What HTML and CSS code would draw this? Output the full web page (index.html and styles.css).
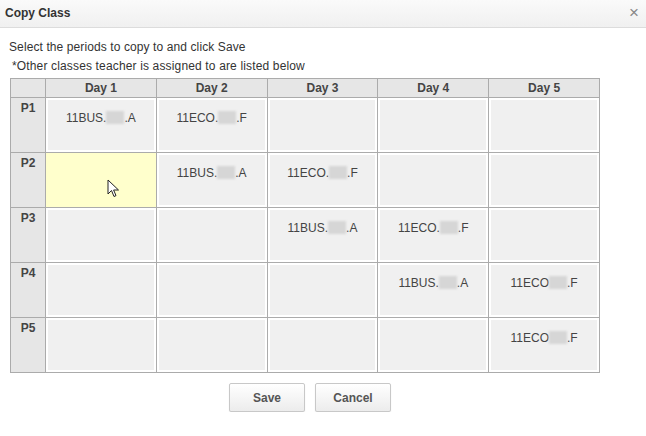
FILE: index.html
```html
<!DOCTYPE html>
<html lang="en">
<head>
    <meta charset="UTF-8">
    <meta name="viewport" content="width=device-width, initial-scale=1.0">
    <title>Copy Class</title>
    <link rel="stylesheet" href="styles.css">
</head>
<body>

    <div class="dialog-title">
        <span>Copy Class</span>
        <span class="close">&times;</span>
    </div>

    <div class="dialog-body">
        <p class="intro">Select the periods to copy to and click Save</p>
        <p class="note">*Other classes teacher is assigned to are listed below</p>

        <table class="grid">
            <colgroup>
                <col class="col-period">
                <col><col><col><col><col>
            </colgroup>
            <thead>
                <tr>
                    <th></th>
                    <th>Day 1</th>
                    <th>Day 2</th>
                    <th>Day 3</th>
                    <th>Day 4</th>
                    <th>Day 5</th>
                </tr>
            </thead>
            <tbody>
                <tr>
                    <th class="period">P1</th>
                    <td><div class="slot">11BUS.<span class="blur"></span>.A</div></td>
                    <td><div class="slot">11ECO.<span class="blur"></span>.F</div></td>
                    <td><div class="slot"></div></td>
                    <td><div class="slot"></div></td>
                    <td><div class="slot"></div></td>
                </tr>
                <tr>
                    <th class="period">P2</th>
                    <td class="selected">
                        <div class="slot">
                            <svg class="cursor" width="13" height="19" viewBox="0 0 13 19">
                                <path d="M1 1 L1 15 L4.5 11.5 L7 17.5 L9 16.6 L6.6 11 L11.5 11 Z" fill="#fff" stroke="#222" stroke-width="1" stroke-linejoin="round"/>
                            </svg>
                        </div>
                    </td>
                    <td><div class="slot">11BUS.<span class="blur"></span>.A</div></td>
                    <td><div class="slot">11ECO.<span class="blur"></span>.F</div></td>
                    <td><div class="slot"></div></td>
                    <td><div class="slot"></div></td>
                </tr>
                <tr>
                    <th class="period">P3</th>
                    <td><div class="slot"></div></td>
                    <td><div class="slot"></div></td>
                    <td><div class="slot">11BUS.<span class="blur"></span>.A</div></td>
                    <td><div class="slot">11ECO.<span class="blur"></span>.F</div></td>
                    <td><div class="slot"></div></td>
                </tr>
                <tr>
                    <th class="period">P4</th>
                    <td><div class="slot"></div></td>
                    <td><div class="slot"></div></td>
                    <td><div class="slot"></div></td>
                    <td><div class="slot">11BUS.<span class="blur"></span>.A</div></td>
                    <td><div class="slot">11ECO<span class="blur"></span>.F</div></td>
                </tr>
                <tr>
                    <th class="period">P5</th>
                    <td><div class="slot"></div></td>
                    <td><div class="slot"></div></td>
                    <td><div class="slot"></div></td>
                    <td><div class="slot"></div></td>
                    <td><div class="slot">11ECO<span class="blur"></span>.F</div></td>
                </tr>
            </tbody>
        </table>

        <div class="button-row">
            <button type="button">Save</button>
            <button type="button">Cancel</button>
        </div>
    </div>

</body>
</html>
```

FILE: styles.css
```css
*, *::before, *::after {
    box-sizing: border-box;
}

body {
    margin: 0;
    padding: 0;
    font-family: "Liberation Sans", Arial, sans-serif;
    font-size: 12px;
    color: #333;
    background-color: white;
}

.dialog-title {
    display: flex;
    justify-content: space-between;
    align-items: center;
    height: 28px;
    padding: 0 7px 1px 5px;
    background: linear-gradient(#fafafa, #f0f0f0);
    border-bottom: 1px solid #dcdcdc;
    font-weight: bold;
    color: #333;
}

.close {
    font-weight: normal;
    font-size: 17px;
    color: #888;
}

.dialog-body {
    padding: 0 10px;
}

.intro {
    margin: 12px 0 0 -1px;
    line-height: 14px;
    letter-spacing: 0.1px;
}

.note {
    margin: 5px 0 0 2px;
    line-height: 14px;
    letter-spacing: 0.15px;
}

.grid {
    margin-top: 5px;
    width: 590px;
    border-collapse: collapse;
    table-layout: fixed;
}

.col-period {
    width: 35px;
}

.grid th,
.grid td {
    border: 1px solid #ababab;
    padding: 0;
}

.grid thead th {
    height: 19px;
    background-color: #e6e6e6;
    font-weight: bold;
    color: #444;
}

.grid .period {
    height: 55px;
    background-color: #e6e6e6;
    vertical-align: top;
    padding-top: 3px;
    color: #444;
}

.grid td {
    height: 55px;
    padding: 2px;
    background-color: white;
    vertical-align: top;
}

.slot {
    position: relative;
    height: 50px;
    padding-top: 11px;
    background-color: #f0f0f0;
    text-align: center;
    line-height: 14px;
    color: #444;
}

.grid td.selected {
    background-color: #ffffcc;
}

.selected .slot {
    background-color: #ffffcc;
}

.blur {
    display: inline-block;
    width: 18px;
    height: 13px;
    vertical-align: -2px;
    background-color: #d6d6d6;
    filter: blur(1px);
}

.cursor {
    position: absolute;
    left: 59px;
    top: 24px;
}

.button-row {
    display: flex;
    justify-content: center;
    gap: 10px;
    width: 600px;
    margin-top: 10px;
}

button {
    width: 76px;
    height: 29px;
    border: 1px solid #c8c8c8;
    border-radius: 2px;
    background: linear-gradient(#ffffff, #ececec);
    box-shadow: 0 1px 1px rgba(0, 0, 0, 0.12);
    font-family: "Liberation Sans", Arial, sans-serif;
    font-size: 12px;
    font-weight: bold;
    color: #555;
    cursor: pointer;
}
```
